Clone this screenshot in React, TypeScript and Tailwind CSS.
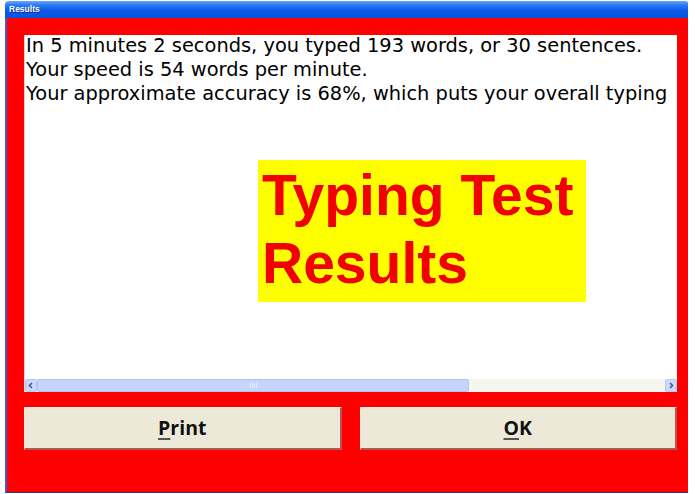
export default function App() {
  return (
    <div className="w-[695px] h-[494px] bg-white overflow-hidden">
      <div className="ml-[5px] mt-[1px] w-[683px] h-[492px] flex flex-col">
        <div className="h-[17px] shrink-0 rounded-tl-[4px] rounded-tr-[2px] bg-[linear-gradient(to_bottom,#6aa8fb_0%,#2f7cf2_22%,#0a5ce8_55%,#0853dc_100%)] flex items-center pl-[4px]">
          <span className="text-white font-bold text-[8.5px] leading-none font-['Liberation_Sans',sans-serif] [text-shadow:1px_1px_0_#0a2f8a]">
            Results
          </span>
        </div>
        <div className="flex-1 flex flex-col bg-[#ff0000] border-l-2 border-l-[#4658c8] border-b border-b-[#2d3a8c] pl-[17px] pr-[11px] pt-[17px]">
          <div className="h-[357px] shrink-0 bg-white flex flex-col border-l border-l-[#d8d8d8]">
            <div className="flex-1 overflow-hidden pl-[1px]">
              <div className="font-['DejaVu_Sans',sans-serif] text-[19.4px] leading-[24px] text-black whitespace-nowrap -mt-[1px]">
                <div>In 5 minutes 2 seconds, you typed 193 words, or 30 sentences.</div>
                <div>Your speed is 54 words per minute.</div>
                <div>Your approximate accuracy is 68%, which puts your overall typing</div>
              </div>
              <div className="ml-[232px] mt-[54px] w-[328px] h-[142px] bg-[#ffff00] pl-[4px] pt-[1px]">
                <div className="font-['Liberation_Sans',sans-serif] font-bold text-[57px] leading-[68px] text-[#f00000] whitespace-nowrap">
                  <div>Typing Test</div>
                  <div>Results</div>
                </div>
              </div>
            </div>
            <div className="h-[13px] shrink-0 flex bg-[#f6f5f0]">
              <div className="w-[12px] h-full flex items-center justify-center bg-[#cbd9fa] border border-[#b6c8f3] rounded-[2px]">
                <svg width="6" height="7" viewBox="0 0 6 7">
                  <path d="M4 1 L1.5 3.5 L4 6" fill="none" stroke="#3d5a9a" strokeWidth="1.6" />
                </svg>
              </div>
              <div className="w-[432px] h-full bg-[#c4d4fa] border border-[#b0c3f2] rounded-[2px] flex items-center justify-center">
                <div className="flex gap-[1px]">
                  <div className="w-[1px] h-[5px] bg-[#e8eefc]" />
                  <div className="w-[1px] h-[5px] bg-[#e8eefc]" />
                  <div className="w-[1px] h-[5px] bg-[#e8eefc]" />
                  <div className="w-[1px] h-[5px] bg-[#e8eefc]" />
                </div>
              </div>
              <div className="flex-1" />
              <div className="w-[12px] h-full flex items-center justify-center bg-[#cbd9fa] border border-[#b6c8f3] rounded-[2px]">
                <svg width="6" height="7" viewBox="0 0 6 7">
                  <path d="M2 1 L4.5 3.5 L2 6" fill="none" stroke="#3d5a9a" strokeWidth="1.6" />
                </svg>
              </div>
            </div>
          </div>
          <div className="mt-[15px] flex gap-[18px]">
            <button className="flex-1 h-[43px] bg-[#ece9d8] border-t border-l border-t-[#f3f0e4] border-l-[#f3f0e4] border-b-2 border-r-2 border-b-[#b0584f] border-r-[#b0584f] flex items-center justify-center font-['Open_Sans',sans-serif] font-bold text-[19.5px] text-[#111]">
              <span>
                <span className="underline decoration-[1.5px] underline-offset-[3px] decoration-[#555]">P</span>rint
              </span>
            </button>
            <button className="flex-1 h-[43px] bg-[#ece9d8] border-t border-l border-t-[#f3f0e4] border-l-[#f3f0e4] border-b-2 border-r-2 border-b-[#b0584f] border-r-[#b0584f] flex items-center justify-center font-['Open_Sans',sans-serif] font-bold text-[19.5px] text-[#111]">
              <span>
                <span className="underline decoration-[1.5px] underline-offset-[3px] decoration-[#555]">O</span>K
              </span>
            </button>
          </div>
        </div>
      </div>
    </div>
  );
}
